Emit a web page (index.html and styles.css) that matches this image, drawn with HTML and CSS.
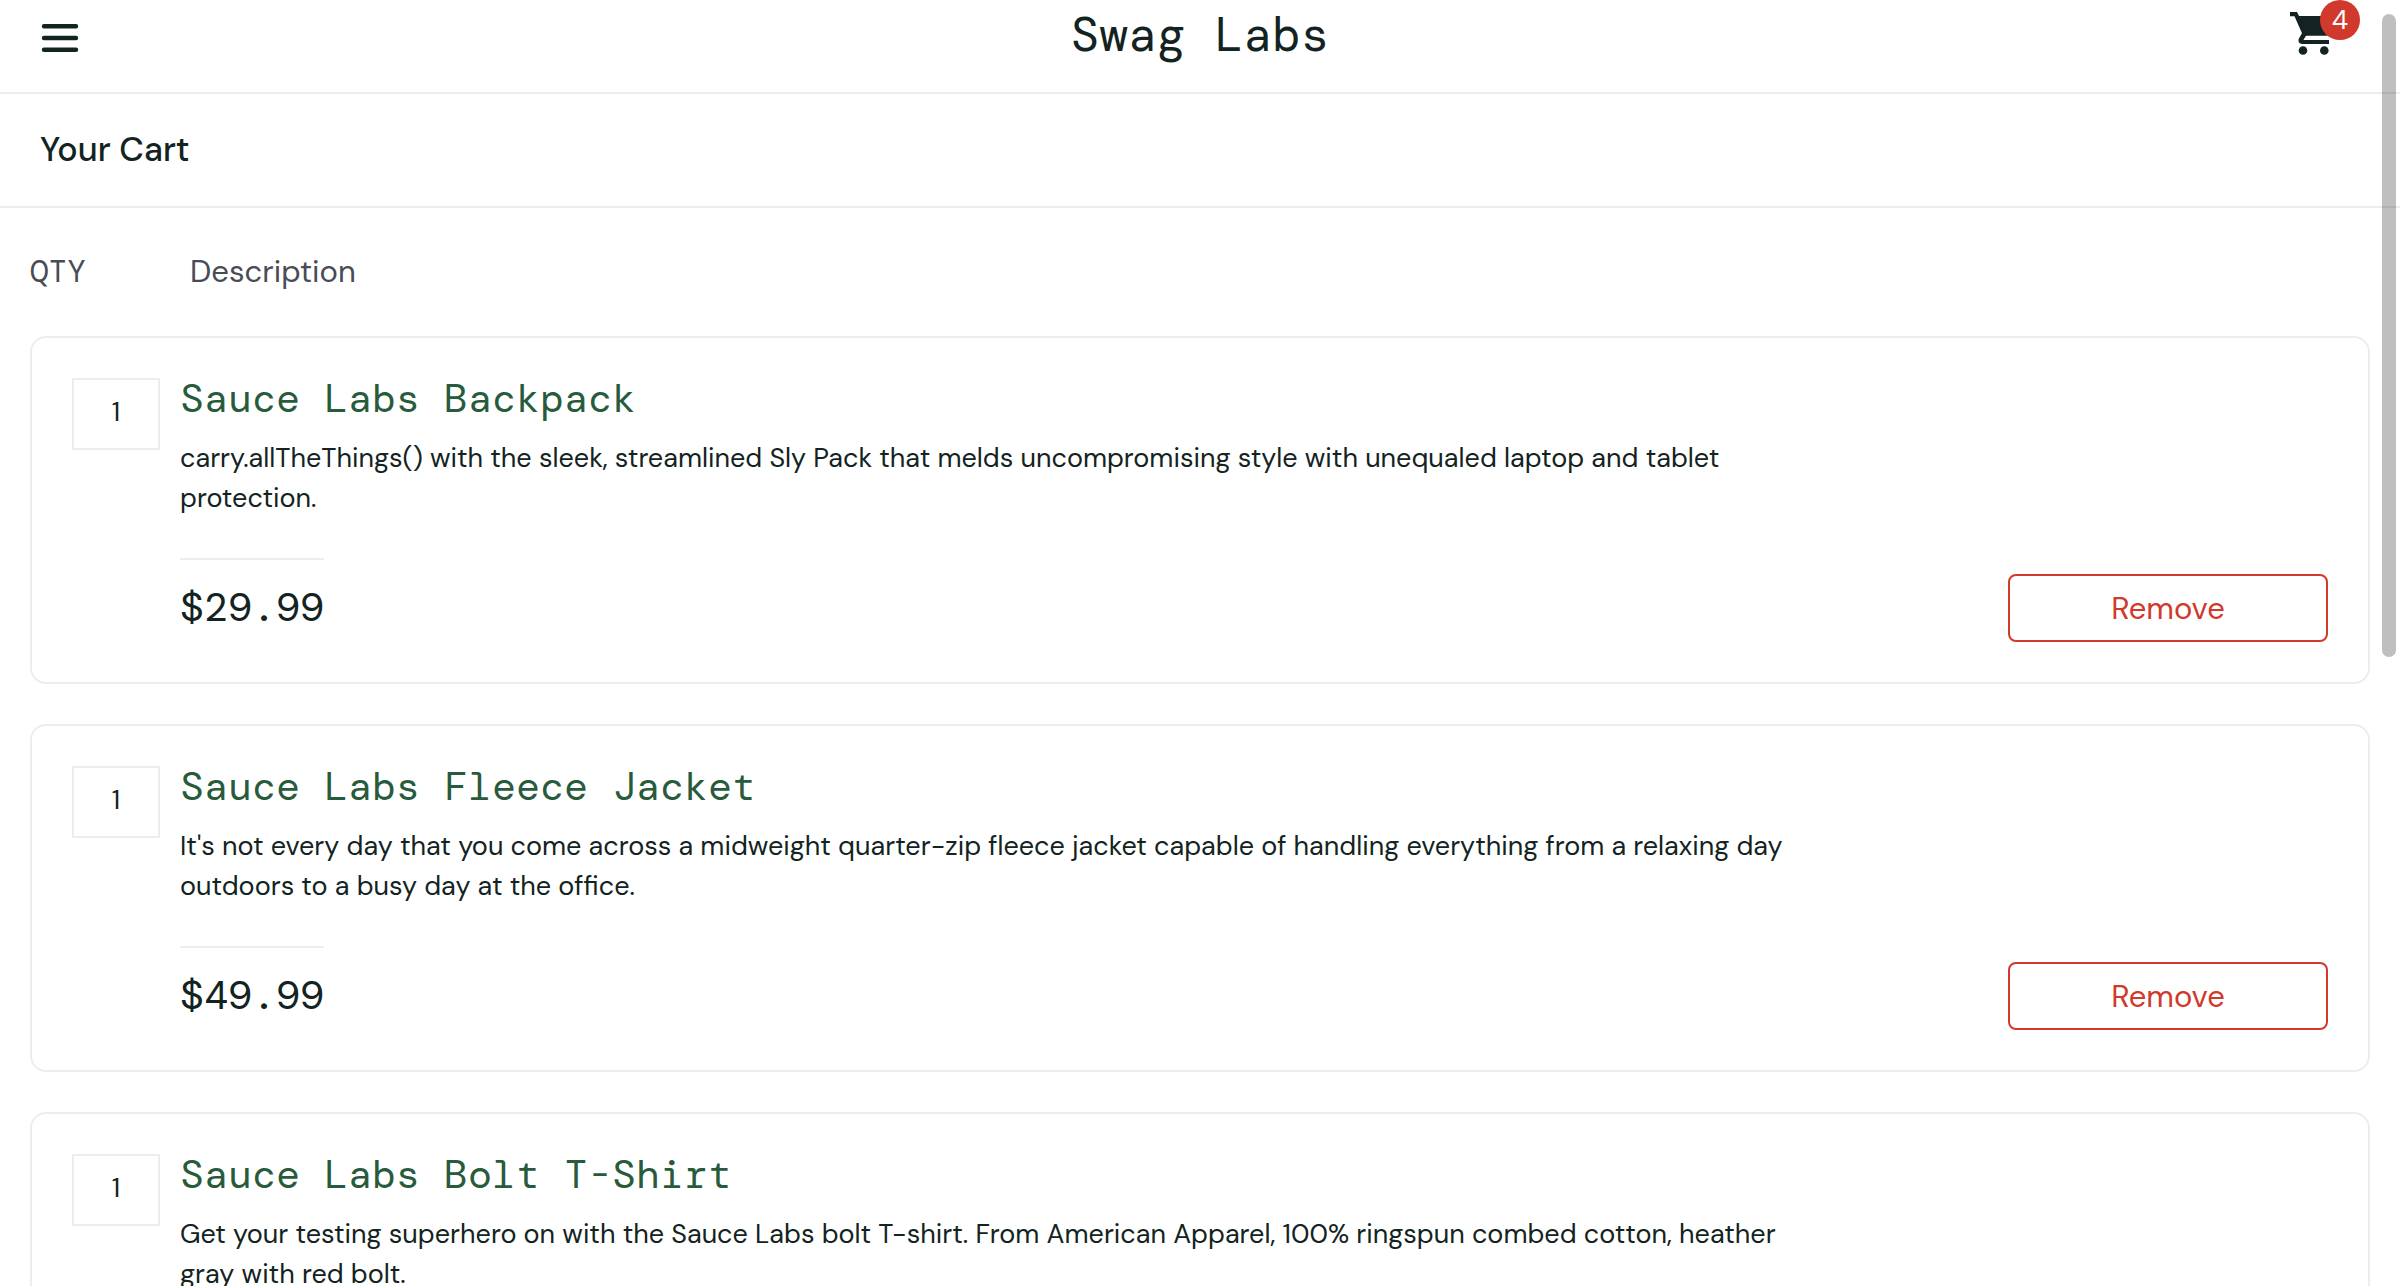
FILE: index.html
```html
<!DOCTYPE html>
<html lang="en">
<head>
<meta charset="utf-8">
<meta name="viewport" content="width=device-width, initial-scale=1">
<title>Swag Labs</title>
<link rel="stylesheet" href="styles.css">
</head>
<body>
<header class="header">
  <button class="menu-button" type="button" aria-label="Open Menu">
    <svg class="menu-icon" viewBox="0 0 38 28" aria-hidden="true">
      <path d="M3 2.2h32M3 14h32M3 25.7h32" fill="none" stroke="currentColor" stroke-width="4.4" stroke-linecap="round"/>
    </svg>
  </button>
  <div class="logo">Swag Labs</div>
  <a class="cart-link" href="#cart" aria-label="Shopping cart, 4 items">
    <svg class="cart-icon" viewBox="0 0 39 43" aria-hidden="true">
      <path d="M0 0h7l2 4h30v19l-2 .7H16l-2.600 4.300H39v4H12.500c-3.500 0-5-3-3.300-6L12 21.200 4.500 4.200H0z" fill="currentColor"/>
      <circle cx="13" cy="38.500" r="4.300" fill="currentColor"/>
      <circle cx="34.300" cy="38.500" r="4.300" fill="currentColor"/>
    </svg>
    <span class="cart-badge">4</span>
  </a>
</header>
<div class="subheader"><h1 class="page-title">Your Cart</h1></div>
<main class="cart" id="cart">
  <div class="cart-labels">
    <div class="label-qty">QTY</div>
    <div class="label-desc">Description</div>
  </div>
  <article class="cart-item">
    <div class="quantity">1</div>
    <div class="item-body">
      <a class="item-name" href="#backpack">Sauce Labs Backpack</a>
      <p class="item-desc">carry.allTheThings() with the sleek, streamlined Sly Pack that melds uncompromising style with unequaled laptop and tablet protection.</p>
      <div class="item-footer">
        <div class="price">$29.99</div>
        <button class="remove-button" type="button">Remove</button>
      </div>
    </div>
  </article>
  <article class="cart-item">
    <div class="quantity">1</div>
    <div class="item-body">
      <a class="item-name" href="#fleece-jacket">Sauce Labs Fleece Jacket</a>
      <p class="item-desc">It's not every day that you come across a midweight quarter-zip fleece jacket capable of handling everything from a relaxing day outdoors to a busy day at the office.</p>
      <div class="item-footer">
        <div class="price">$49.99</div>
        <button class="remove-button" type="button">Remove</button>
      </div>
    </div>
  </article>
  <article class="cart-item">
    <div class="quantity">1</div>
    <div class="item-body">
      <a class="item-name" href="#bolt-t-shirt">Sauce Labs Bolt T-Shirt</a>
      <p class="item-desc">Get your testing superhero on with the Sauce Labs bolt T-shirt. From American Apparel, 100% ringspun combed cotton, heather gray with red bolt.</p>
      <div class="item-footer">
        <div class="price">$15.99</div>
        <button class="remove-button" type="button">Remove</button>
      </div>
    </div>
  </article>
</main>
<div class="scroll-thumb" aria-hidden="true"></div>
</body>
</html>
```
FILE: styles.css
```css
:root {
  --ink: #132322;
  --muted: #484c55;
  --line: #ededed;
  --green: #285b3c;
  --red: #d0392b;
  --sans: "DM Sans", Inter, "Liberation Sans", sans-serif;
  --mono: "DM Mono", "DejaVu Sans Mono", "Liberation Mono", monospace;
}

* {
  box-sizing: border-box;
}

body {
  margin: 0;
  height: 100vh;
  overflow: hidden;
  background: #fff;
  color: var(--ink);
  font-family: var(--sans);
  font-size: 27px;
  line-height: 40px;
}

button {
  font-family: inherit;
  color: inherit;
  background: none;
  cursor: pointer;
}

.header {
  display: grid;
  grid-template-columns: 1fr auto 1fr;
  align-items: start;
  height: 94px;
  padding: 0 40px;
  border-bottom: 2px solid var(--line);
}

.menu-button {
  justify-self: start;
  padding: 24px 1px;
  border: 0;
}

.menu-icon {
  display: block;
  width: 38px;
  height: 28px;
}

.logo {
  font-family: var(--mono);
  font-size: 48px;
  line-height: 70px;
}

.cart-link {
  position: relative;
  justify-self: end;
  width: 70px;
  padding-top: 12px;
  color: inherit;
}

.cart-icon {
  display: block;
  width: 39px;
  height: 43px;
}

.cart-badge {
  position: absolute;
  top: 0;
  right: 0;
  width: 40px;
  height: 40px;
  border-radius: 50%;
  background: var(--red);
  color: #fff;
  text-align: center;
}

.subheader {
  padding: 32px 40px;
  border-bottom: 2px solid var(--line);
}

.page-title {
  margin: 0;
  font-size: 34px;
  font-weight: 500;
  line-height: 48px;
}

.cart {
  display: flex;
  flex-direction: column;
  gap: 40px;
  padding: 40px 30px;
}

.cart-labels {
  display: flex;
  color: var(--muted);
  font-size: 31px;
  line-height: 48px;
}

.label-qty {
  width: 160px;
  font-family: var(--mono);
}

.cart-item {
  display: flex;
  gap: 20px;
  height: 348px;
  padding: 40px;
  border: 2px solid var(--line);
  border-radius: 16px;
}

.quantity {
  flex: none;
  width: 88px;
  height: 72px;
  padding-top: 12px;
  border: 2px solid var(--line);
  text-align: center;
}

.item-body {
  display: flex;
  flex: 1;
  flex-direction: column;
  align-items: flex-start;
}

.item-name {
  color: var(--green);
  font-family: var(--mono);
  font-size: 40px;
  line-height: 40px;
  text-decoration: none;
}

.item-desc {
  width: 76%;
  margin: 20px 0 0;
}

.item-footer {
  display: flex;
  align-items: flex-end;
  justify-content: space-between;
  width: 100%;
  margin-top: auto;
}

.price {
  padding-top: 22px;
  margin-bottom: 10px;
  border-top: 2px solid var(--line);
  font-family: var(--mono);
  font-size: 40px;
  line-height: 50px;
}

.remove-button {
  width: 320px;
  height: 68px;
  border: 2px solid var(--red);
  border-radius: 8px;
  color: var(--red);
  font-size: 31px;
}

.scroll-thumb {
  position: fixed;
  top: 14px;
  right: 4px;
  width: 14px;
  height: 50vh;
  border-radius: 7px;
  background: rgb(0 0 0 / 25%);
}
```
